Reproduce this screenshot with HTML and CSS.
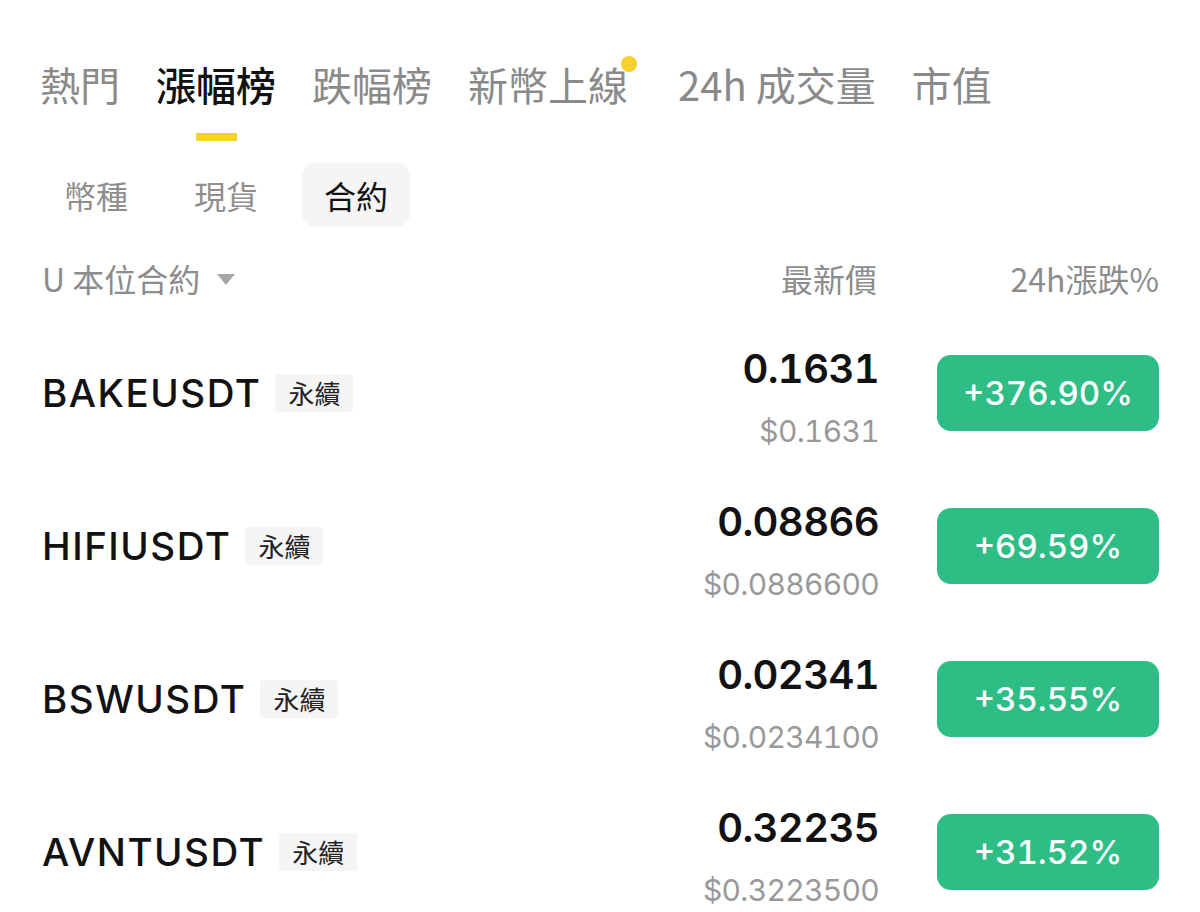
FILE: index.html
```html
<!DOCTYPE html>
<html lang="zh-Hant">
<head>
  <meta charset="UTF-8" />
  <meta name="viewport" content="width=device-width, initial-scale=1.0"/>
  <title>漲幅榜</title>
  <link rel="stylesheet" href="styles.css">
</head>
<body>
  <div class="container">
    <nav class="tabs">
      <div class="tab"><span class="tab-label">熱門</span></div>
      <div class="tab active"><span class="tab-label">漲幅榜</span><span class="indicator"></span></div>
      <div class="tab"><span class="tab-label">跌幅榜</span></div>
      <div class="tab has-dot"><span class="tab-label">新幣上線<span class="dot"></span></span></div>
      <div class="tab"><span class="tab-label">24h 成交量</span></div>
      <div class="tab"><span class="tab-label">市值</span></div>
    </nav>

    <div class="subtabs">
      <div class="subtab">幣種</div>
      <div class="subtab">現貨</div>
      <div class="subtab active">合約</div>
    </div>

    <div class="list-header">
      <div class="market-select">U 本位合約 <span class="caret"></span></div>
      <div class="col-price">最新價</div>
      <div class="col-change">24h漲跌%</div>
    </div>

    <div class="list">
      <div class="row">
        <div class="symbol"><span class="name">BAKEUSDT</span><span class="tag">永續</span></div>
        <div class="price">
          <div class="last">0.1631</div>
          <div class="usd">$0.1631</div>
        </div>
        <div class="change">+376.90%</div>
      </div>

      <div class="row">
        <div class="symbol"><span class="name">HIFIUSDT</span><span class="tag">永續</span></div>
        <div class="price">
          <div class="last">0.08866</div>
          <div class="usd">$0.0886600</div>
        </div>
        <div class="change">+69.59%</div>
      </div>

      <div class="row">
        <div class="symbol"><span class="name">BSWUSDT</span><span class="tag">永續</span></div>
        <div class="price">
          <div class="last">0.02341</div>
          <div class="usd">$0.0234100</div>
        </div>
        <div class="change">+35.55%</div>
      </div>

      <div class="row">
        <div class="symbol"><span class="name">AVNTUSDT</span><span class="tag">永續</span></div>
        <div class="price">
          <div class="last">0.32235</div>
          <div class="usd">$0.3223500</div>
        </div>
        <div class="change">+31.52%</div>
      </div>
    </div>
  </div>
</body>
</html>
```

FILE: styles.css
```css
body {
  margin: 0;
  padding: 0;
  background-color: #ffffff;
  color: #121212;
  font-family: "Noto Sans CJK TC", "Noto Sans", sans-serif;
  overflow: hidden;
}

.container {
  padding: 56px 41px 0 42px;
}

/* top tabs */
.tabs {
  display: flex;
  gap: 36px;
  margin-left: -2px;
}

.tab {
  display: flex;
  flex-direction: column;
  align-items: center;
}

.tab-label {
  position: relative;
  font-size: 40px;
  line-height: 56px;
  color: #8a8a8a;
  white-space: nowrap;
}

.tab.active .tab-label {
  color: #121212;
  font-weight: 500;
}

.tab.has-dot {
  padding-right: 14px;
}

.dot {
  position: absolute;
  top: 0;
  right: -9px;
  width: 16px;
  height: 16px;
  border-radius: 50%;
  background-color: #f8d12f;
}

.indicator {
  display: block;
  width: 41px;
  height: 8px;
  margin-top: 21px;
  background-color: #f8d12f;
}

/* sub tabs */
.subtabs {
  display: flex;
  gap: 22px;
  margin-top: 22px;
}

.subtab {
  height: 64px;
  padding: 0 22px;
  line-height: 64px;
  font-size: 32px;
  color: #8f8f8f;
  border-radius: 14px;
}

.subtab.active {
  background-color: #f5f5f5;
  color: #121212;
}

/* list header */
.list-header {
  display: flex;
  align-items: center;
  height: 44px;
  margin-top: 29px;
  font-size: 32px;
  color: #8c8c8c;
}

.market-select {
  flex: 1;
  display: flex;
  align-items: center;
  gap: 17px;
}

.caret {
  width: 0;
  height: 0;
  border-left: 9px solid transparent;
  border-right: 9px solid transparent;
  border-top: 11px solid #a6a6a6;
  margin-top: 2px;
}

.col-price {
  text-align: right;
}

.col-change {
  width: 222px;
  margin-left: 60px;
  text-align: right;
}

/* rows */
.list {
  margin-top: 16px;
}

.row {
  display: flex;
  align-items: center;
  height: 153px;
}

.symbol {
  flex: 1;
  display: flex;
  align-items: center;
  gap: 14px;
}

.name {
  font-family: Inter, "Noto Sans", sans-serif;
  font-size: 38.5px;
  font-weight: 500;
  letter-spacing: 1.5px;
  color: #121212;
}

.tag {
  height: 38px;
  padding: 0 13px;
  line-height: 38px;
  font-size: 26px;
  color: #222222;
  background-color: #f5f5f5;
  border-radius: 4px;
}

.price {
  margin-top: 8px;
  text-align: right;
  font-family: Inter, "Noto Sans", sans-serif;
  font-variant-numeric: tabular-nums;
}

.last {
  font-size: 40px;
  line-height: 48px;
  font-weight: 600;
  letter-spacing: -0.6px;
  color: #121212;
}

.usd {
  margin-top: 20px;
  font-size: 30px;
  line-height: 36px;
  letter-spacing: -0.7px;
  color: #999999;
}

.change {
  width: 222px;
  height: 76px;
  margin-left: 58px;
  border-radius: 14px;
  background-color: #2ebd85;
  color: #ffffff;
  font-family: Inter, "Noto Sans", sans-serif;
  font-variant-numeric: tabular-nums;
  font-size: 33px;
  font-weight: 500;
  line-height: 76px;
  text-align: center;
}
```
